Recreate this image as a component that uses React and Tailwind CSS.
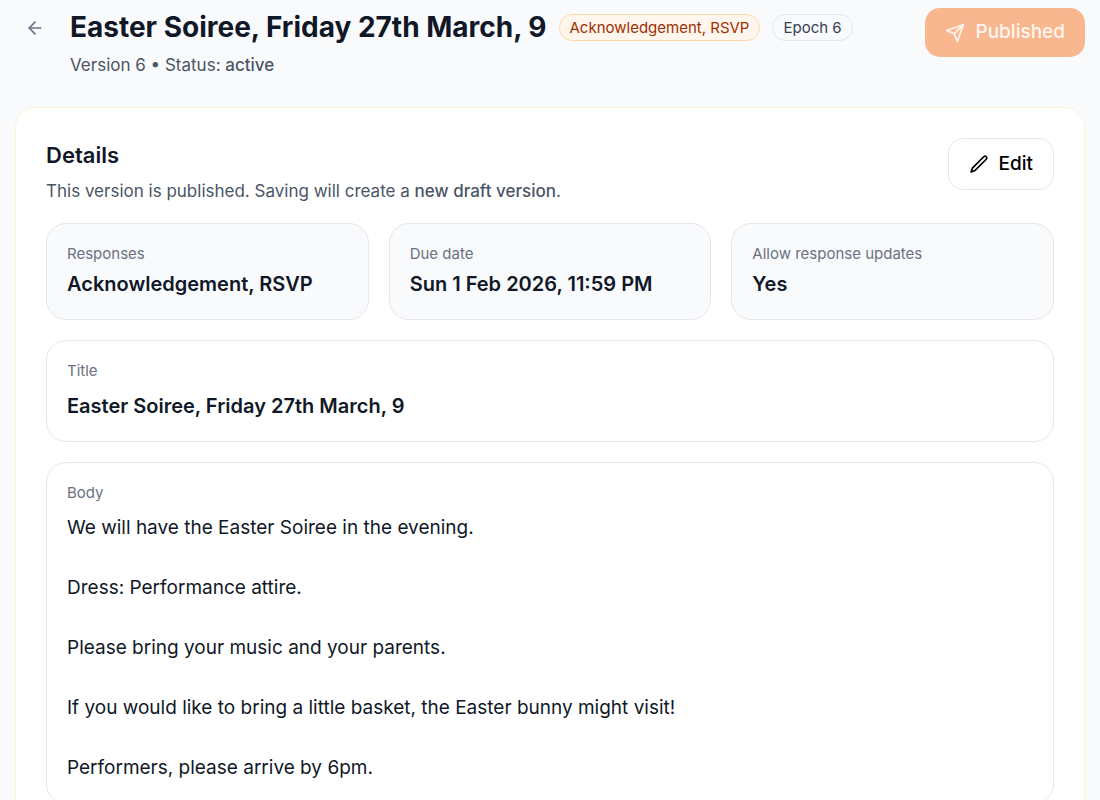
import { ArrowLeft } from "lucide-react";

const facts = [
  { label: "Responses", value: "Acknowledgement, RSVP" },
  { label: "Due date", value: "Sun 1 Feb 2026, 11:59 PM" },
  { label: "Allow response updates", value: "Yes" },
];

const body = `We will have the Easter Soiree in the evening.

Dress: Performance attire.

Please bring your music and your parents.

If you would like to bring a little basket, the Easter bunny might visit!

Performers, please arrive by 6pm.`;

function Icon({ children }) {
  return (
    <svg
      width="20"
      height="20"
      viewBox="0 0 24 24"
      fill="none"
      stroke="currentColor"
      strokeWidth="2"
      strokeLinecap="round"
      strokeLinejoin="round"
      aria-hidden="true"
    >
      {children}
    </svg>
  );
}

function PencilIcon() {
  return (
    <Icon>
      <path d="M17.7 3.3a2.12 2.12 0 0 1 3 3L7.3 19.7 2.5 21.5l1.8-4.8Z" />
    </Icon>
  );
}

function SendIcon() {
  return (
    <Icon>
      <path d="m22 2-7 20-4-9-9-4Z" />
      <path d="M22 2 11 13" />
    </Icon>
  );
}

function Label({ children }) {
  return <div className="text-[15px] leading-5 text-gray-500">{children}</div>;
}

export default function App() {
  return (
    <div className="h-screen overflow-hidden bg-[#f9fafc] px-[15px] pt-2 font-['Inter',sans-serif] text-gray-900">
      <header className="flex items-start justify-between">
        <div className="flex items-start">
          <button type="button" aria-label="Back" className="mt-2.5 ml-2.5 text-gray-500">
            <ArrowLeft size={20} strokeWidth={2} />
          </button>
          <div className="ml-[25px]">
            <div className="flex items-center gap-3">
              <h1 className="text-[28px] leading-[39px] font-bold">Easter Soiree, Friday 27th March, 9</h1>
              <span className="rounded-full border border-orange-200 bg-orange-50 px-2.5 text-[15px] leading-[25px] text-orange-800">
                Acknowledgement, RSVP
              </span>
              <span className="rounded-full border border-gray-200 px-2.5 text-[15px] leading-[25px] text-gray-700">
                Epoch 6
              </span>
            </div>
            <p className="mt-1.5 text-[17px] leading-6 text-gray-600">
              Version 6 • Status: <span className="font-medium">active</span>
            </p>
          </div>
        </div>
        <button
          type="button"
          disabled
          className="flex h-[49px] items-center gap-2.5 rounded-[15px] bg-[#f9b78f] px-5 text-[19px] font-medium text-[#fff6ef]"
        >
          <SendIcon />
          Published
        </button>
      </header>

      <main className="mt-[30px] rounded-[20px] border border-[#fdf3d0] bg-white p-[30px]">
        <div className="flex items-start justify-between">
          <div>
            <h2 className="mt-1 text-[22px] leading-[26px] font-semibold">Details</h2>
            <p className="mt-[11px] text-[17px] leading-6 text-gray-600">
              This version is published. Saving will create a <span className="font-medium">new draft version</span>.
            </p>
          </div>
          <button
            type="button"
            className="flex h-[52px] items-center gap-2.5 rounded-[15px] border border-gray-200 bg-white px-5 text-[19px] font-medium text-black"
          >
            <PencilIcon />
            Edit
          </button>
        </div>

        <div className="mt-5 grid grid-cols-3 gap-5">
          {facts.map((f) => (
            <div key={f.label} className="rounded-[20px] border border-gray-200 bg-[#f9fafc] p-5">
              <Label>{f.label}</Label>
              <div className="mt-[5px] text-[20px] leading-[30px] font-semibold">{f.value}</div>
            </div>
          ))}
        </div>

        <section className="mt-5 rounded-[20px] border border-gray-200 p-5">
          <Label>Title</Label>
          <div className="mt-2.5 text-[20px] leading-[30px] font-semibold">Easter Soiree, Friday 27th March, 9</div>
        </section>

        <section className="mt-5 rounded-[20px] border border-gray-200 p-5">
          <Label>Body</Label>
          <p className="mt-2.5 text-[19px] leading-[30px] whitespace-pre-wrap">{body}</p>
        </section>
      </main>
    </div>
  );
}
